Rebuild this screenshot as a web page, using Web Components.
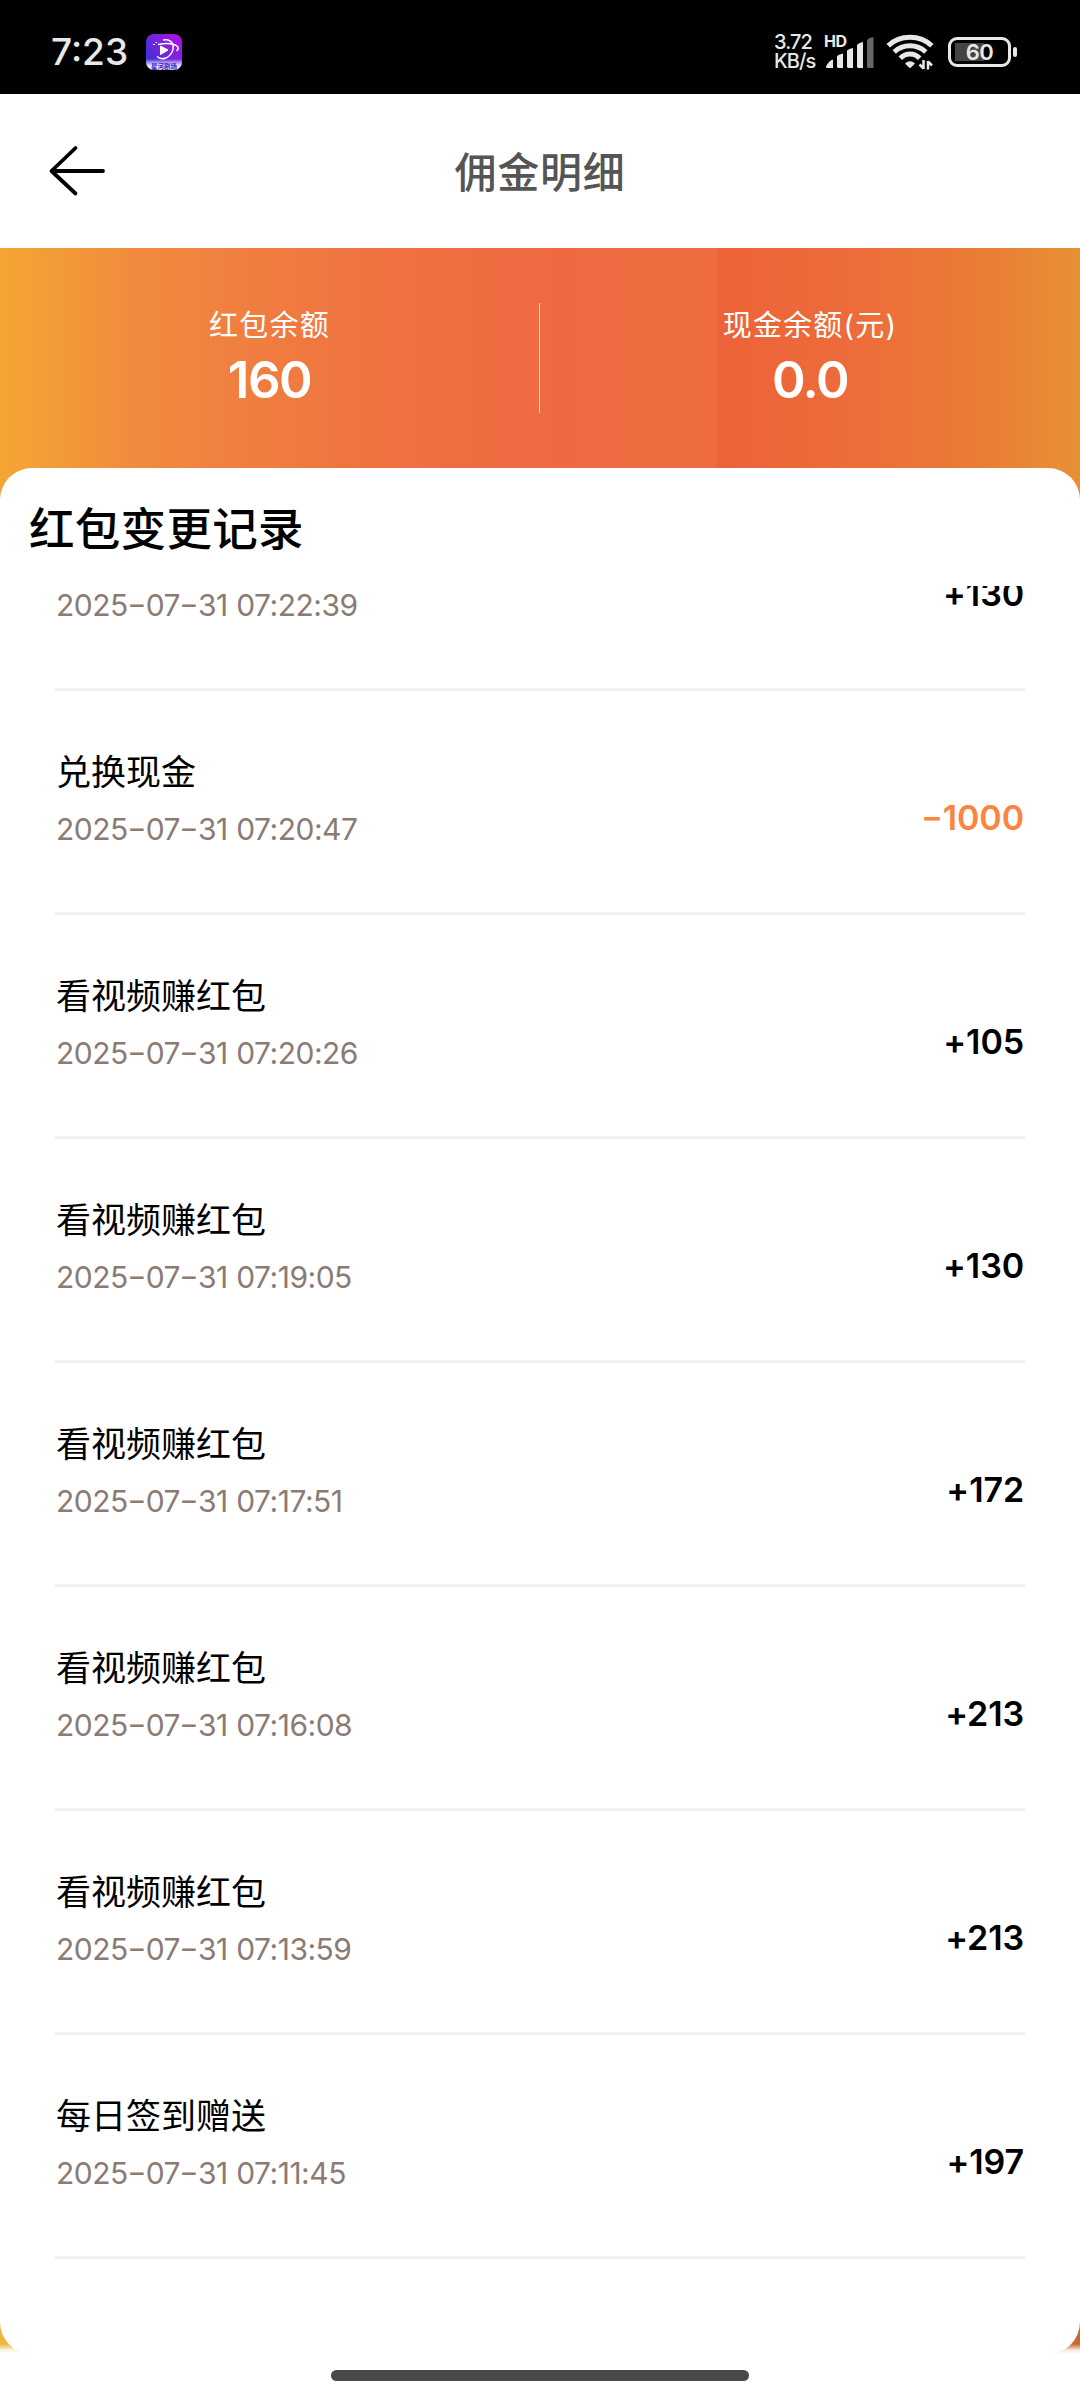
<!DOCTYPE html>
<html lang="zh-CN">
<head>
<meta charset="utf-8">
<title>佣金明细</title>
<style>
  html, body {
    margin: 0;
    background: #fff;
  }
  body {
    width: 1080px;
    height: 2400px;
    overflow: hidden;
    font-family: Inter, "Noto Sans CJK SC", sans-serif;
  }
</style>
</head>
<body>
<commission-page></commission-page>

<script>
// the first record is scrolled under the title, only its date and amount are left
const records = [
  ["", "2025-07-31 07:22:39", "+130"],
  ["兑换现金", "2025-07-31 07:20:47", "-1000"],
  ["看视频赚红包", "2025-07-31 07:20:26", "+105"],
  ["看视频赚红包", "2025-07-31 07:19:05", "+130"],
  ["看视频赚红包", "2025-07-31 07:17:51", "+172"],
  ["看视频赚红包", "2025-07-31 07:16:08", "+213"],
  ["看视频赚红包", "2025-07-31 07:13:59", "+213"],
  ["每日签到赠送", "2025-07-31 07:11:45", "+197"]
];

const ICONS_SVG = {
  back: `<svg width="60" height="54" viewBox="0 0 60 54" fill="none" stroke="#000" stroke-width="3.8" stroke-linecap="round" stroke-linejoin="round">
    <path d="M28.500 4 4.500 27 28.500 49.500M4.500 27H56"/></svg>`,
  app: `<svg width="36" height="36" viewBox="0 0 36 36">
    <defs>
      <linearGradient id="bg" x1="0" y1=".8" x2="1" y2="0"><stop offset="0" stop-color="#3b2fd8"/><stop offset=".5" stop-color="#7526dc"/><stop offset="1" stop-color="#b80be6"/></linearGradient>
      <linearGradient id="foot" x1="0" y1="0" x2="0" y2="1"><stop offset="0" stop-color="#fff" stop-opacity="0"/><stop offset=".6" stop-color="#e6e2ff"/></linearGradient>
    </defs>
    <rect width="36" height="36" rx="8" fill="url(#bg)"/>
    <path d="M0 25h36v3a8 8 0 0 1-8 8H8a8 8 0 0 1-8-8z" fill="url(#foot)"/>
    <path d="M14.500 12l7.500 4-7.500 4.500z" fill="#fff" stroke="#fff" stroke-linejoin="round"/>
    <path d="M17 6c9-2 12 6 9 12-3 6-10 9-15 4.500M12 10.500c8-1.500 16-1 19.500 2 1.500 1.500.5 3-1 4.500" fill="none" stroke="#fff" stroke-width="1.500"/>
    <path d="M7 10.500h2M9.500 8.500h1.500" stroke="#fff"/>
    <text x="18" y="34.800" text-anchor="middle" font-size="6.500" font-weight="700" fill="#3426c4">星河剧场</text></svg>`,
  signal: `<svg width="50" height="34" viewBox="0 0 50 34" fill="#e8e8e8">
    <path d="M1 31.500q3-6 7-7V33H2q-1 0-1-1.500zM12 32V21q2-2 6-2.500V33h-5zM22 32V15.500q2-2 6-2.500V33h-5zM32 32V10q2-2.500 6-3V33h-5z"/>
    <path d="M42 32V5q2-2.500 6.500-3V33H43z" fill="#666"/></svg>`,
  wifi: `<svg width="48" height="36" viewBox="0 0 48 36">
    <g fill="none" stroke="#e8e8e8" stroke-width="5">
      <path d="M2.200 11.800C14 .5 34 .5 45.800 11.800"/><path d="M8.200 18C17 9.700 31 9.700 39.800 18"/><path d="M14.300 24.200C20 18.700 28 18.700 33.700 24.200"/>
    </g>
    <path d="M19 29.500q5-4.500 10 0l-4 4q-1 .8-2 0z" fill="#e8e8e8"/>
    <path d="M37.500 26v9M37.500 34.500l-4-4M42 35.500V27M42 27.500l4 4" fill="none" stroke="#e8e8e8" stroke-width="2.500"/></svg>`
};

function define(name, html, setup) {
  const template = document.createElement("template");
  template.innerHTML = html;
  customElements.define(name, class extends HTMLElement {
    constructor() {
      super();
      this.attachShadow({ mode: "open" });
      this.shadowRoot.appendChild(template.content.cloneNode(true));
    }
    connectedCallback() {
      if (setup) setup(this, this.shadowRoot);
    }
  });
}

// wide dash between figures
function dashes(text) {
  return text.replace(/-/g, "<i>-</i>");
}

define("phone-status", `
  <style>
    :host {
      display: flex;
      align-items: center;
      box-sizing: border-box;
      height: 94px;
      padding: 9px 63px 0 51px;
      background: #000;
      color: #e8e8e8;
    }
    svg { display: block; }
    .time {
      width: 95px;
      font-size: 37px;
      font-weight: 550;
      letter-spacing: 0;
    }
    .speed {
      width: 51px;
      margin-left: auto;
      font-size: 20px;
      line-height: 19px;
      font-weight: 500;
      white-space: nowrap;
      letter-spacing: -.9px;
    }
    .net { position: relative; margin-right: 11px; }
    .hd {
      position: absolute;
      left: -1px;
      top: -2px;
      font-size: 16px;
      line-height: 16px;
      font-weight: 650;
      letter-spacing: -.4px;
    }
    .battery {
      display: flex;
      align-items: center;
      margin-left: 14px;
      gap: 2px;
    }
    .cell {
      box-sizing: border-box;
      width: 63px;
      height: 30px;
      border: 3px solid #e8e8e8;
      border-radius: 9px;
      font-size: 22px;
      line-height: 25px;
      font-weight: 600;
      letter-spacing: -.6px;
      text-align: center;
      background: linear-gradient(#444, #444) 4px 3px / 29px 18px no-repeat;
    }
    .tip {
      width: 4px;
      height: 10px;
      border-radius: 2px;
      background: #e8e8e8;
    }
  </style>
  <div class="time">7:23</div>
  ${ICONS_SVG.app}
  <div class="speed">3.72<br>KB/s</div>
  <div class="net">${ICONS_SVG.signal}<span class="hd">HD</span></div>
  ${ICONS_SVG.wifi}
  <div class="battery"><div class="cell">60</div><div class="tip"></div></div>
`);

define("nav-bar", `
  <style>
    :host {
      display: grid;
      grid-template-columns: 110px 1fr 110px;
      align-items: center;
      height: 154px;
      background: #fff;
    }
    .back { padding-left: 47px; }
    svg { display: block; }
    .title {
      padding-bottom: 4px;
      text-align: center;
      font-size: 42px;
      letter-spacing: .8px;
      font-weight: 500;
      color: #555;
    }
  </style>
  <div class="back">${ICONS_SVG.back}</div>
  <div class="title"><slot></slot></div>
`);

define("balance-item", `
  <style>
    :host {
      display: flex;
      flex-direction: column;
      align-items: center;
      padding-top: 3px;
      color: #fff;
    }
    .label {
      font-size: 29px;
      line-height: 40px;
      letter-spacing: 1.200px;
    }
    .value {
      margin-top: 4px;
      font-size: 51px;
      line-height: 60px;
      font-weight: 600;
      letter-spacing: -1.500px;
    }
  </style>
  <div class="label"><slot></slot></div>
  <div class="value"></div>
`, (el, root) => {
  root.querySelector(".value").textContent = el.getAttribute("value");
});

define("record-item", `
  <style>
    :host {
      display: flex;
      box-sizing: border-box;
      height: 224px;
      padding: 57px 1px 0 1px;
      border-bottom: 3px solid #f0f0f0;
      justify-content: space-between;
    }
    .name {
      height: 48px;
      font-size: 35px;
      line-height: 48px;
      color: #000;
    }
    .date {
      margin-top: 13px;
      font-size: 30px;
      line-height: 40px;
      color: #8b7b74;
      letter-spacing: -.5px;
      word-spacing: .5px;
      white-space: nowrap;
    }
    .amount {
      margin-top: 46px;
      font-size: 34px;
      line-height: 48px;
      font-weight: 600;
      letter-spacing: -.1px;
      color: #000;
    }
    .amount.out { color: #fa8442; }
    i {
      display: inline-block;
      width: .6em;
      font-style: normal;
      text-align: center;
      letter-spacing: 0;
      transform: translateY(-1px) scaleX(1.4);
    }
  </style>
  <div>
    <div class="name"></div>
    <div class="date"></div>
  </div>
  <div class="amount"></div>
`, (el, root) => {
  const amount = root.querySelector(".amount");
  root.querySelector(".name").textContent = el.getAttribute("name");
  root.querySelector(".date").innerHTML = dashes(el.getAttribute("date"));
  amount.innerHTML = dashes(el.getAttribute("amount"));
  amount.classList.toggle("out", el.getAttribute("amount")[0] === "-");
});

define("record-card", `
  <style>
    :host {
      display: flex;
      flex-direction: column;
      box-sizing: border-box;
      height: 1886px;
      border-radius: 32px;
      background: #fff;
      overflow: hidden;
    }
    h2 {
      flex: none;
      box-sizing: border-box;
      height: 118px;
      margin: 0;
      padding: 30px 0 0 29px;
      font-size: 45.500px;
      letter-spacing: .3px;
      line-height: 64px;
      font-weight: 500;
      color: #000;
    }
    .list {
      flex: 1;
      padding: 0 55px;
      overflow: hidden;
    }
    .inner { margin-top: -119px; }
  </style>
  <h2><slot></slot></h2>
  <div class="list"><div class="inner"></div></div>
`, (el, root) => {
  root.querySelector(".inner").innerHTML = records.map(([name, date, amount]) =>
    `<record-item name="${name}" date="${date}" amount="${amount}"></record-item>`
  ).join("");
});

define("commission-page", `
  <style>
    :host {
      display: flex;
      flex-direction: column;
      width: 1080px;
      height: 2400px;
      background: #fff;
    }
    .body {
      height: 2106px;
      background:
        linear-gradient(transparent 2096px, rgba(255, 255, 255, .85) 2102px, #fff 2106px),
        linear-gradient(90deg, #ecb63f 50%, #c9682f 50%) 0 100% / 100% 60px no-repeat,
        linear-gradient(90deg, #f5a534 0, #f39a38 60px, #f18b3d 130px, #f07f40 240px, #ef7040 400px, #ef6841 560px, #ef6c40 650px, #ef6c40 717px, #ed6238 717px, #ed6c3a 850px, #ea7936 960px, #e89035 1080px);
    }
    .balance {
      display: grid;
      grid-template-columns: 539px 1px 540px;
      box-sizing: border-box;
      height: 220px;
      padding-top: 55px;
    }
    .line {
      height: 110px;
      background: rgba(255, 255, 255, .75);
    }
    .home {
      width: 418px;
      height: 11px;
      margin: 16px auto 0;
      border-radius: 6px;
      background: #494949;
    }
  </style>
  <phone-status></phone-status>
  <nav-bar>佣金明细</nav-bar>
  <div class="body">
    <div class="balance">
      <balance-item value="160">红包余额</balance-item>
      <div class="line"></div>
      <balance-item value="0.0">现金余额(元)</balance-item>
    </div>
    <record-card>红包变更记录</record-card>
  </div>
  <div class="home"></div>
`);
</script>
</body>
</html>
